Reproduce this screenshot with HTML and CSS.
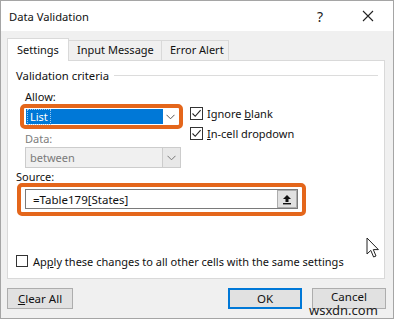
FILE: index.html
```html
<!DOCTYPE html>
<html>
<head>
<meta charset="utf-8">
<link rel="stylesheet" href="styles.css">
</head>
<body>
<div class="window">
  <div class="titlebar">
    <span class="title">Data Validation</span>
    <span class="help">?</span>
    <svg class="close" width="12" height="12" viewBox="0 0 12 12"><path d="M1 1 L11 11 M11 1 L1 11" stroke="#222" stroke-width="1.1" fill="none"/></svg>
  </div>
  <div class="body">
    <div class="tabs">
      <div class="tab active">Settings</div>
      <div class="tab tab-input">Input Message</div>
      <div class="tab tab-error">Error Alert</div>
    </div>
    <div class="panel">
      <div class="group-title"><span>Validation criteria</span><span class="rule"></span></div>
      <div class="criteria">
        <div class="col-left">
          <div class="label">Allow:</div>
          <div class="hl hl-allow">
            <div class="combo">
              <span class="val selected"><span class="focus">List</span></span>
              <span class="arrow"><svg width="9" height="6" viewBox="0 0 9 6"><path d="M0.5 0.8 L4.5 4.8 L8.5 0.8" stroke="#555" fill="none" stroke-width="1"/></svg></span>
            </div>
          </div>
          <div class="label label-data">Data:</div>
          <div class="combo disabled">
            <span class="val">between</span>
            <span class="arrow"><svg width="9" height="6" viewBox="0 0 9 6"><path d="M0.5 0.8 L4.5 4.8 L8.5 0.8" stroke="#777" fill="none" stroke-width="1"/></svg></span>
          </div>
        </div>
        <div class="col-right">
          <label class="check"><span class="box checked"><svg width="11" height="11" viewBox="0 0 11 11"><path d="M1.5 5.5 L4.2 8.3 L9.6 2.2" stroke="#222" fill="none" stroke-width="1.1"/></svg></span><span>Ignore <u>b</u>lank</span></label>
          <label class="check"><span class="box checked"><svg width="11" height="11" viewBox="0 0 11 11"><path d="M1.5 5.5 L4.2 8.3 L9.6 2.2" stroke="#222" fill="none" stroke-width="1.1"/></svg></span><span><u>I</u>n-cell dropdown</span></label>
        </div>
      </div>
      <div class="label label-source">Source:</div>
      <div class="hl hl-source">
        <div class="input">
          <span class="input-text">=Table179[States]</span>
          <span class="refbtn"><svg width="10" height="11" viewBox="0 0 10 11"><path d="M5 1 L9 5 L6.5 5 L6.5 8 L3.5 8 L3.5 5 L1 5 Z" fill="#111"/><rect x="1" y="9" width="8" height="1.4" fill="#111"/></svg></span>
        </div>
      </div>
      <label class="check apply"><span class="box"></span><span>Ap<u>p</u>ly these changes to all other cells with the same settings</span></label>
    </div>
    <div class="buttons">
      <div class="btn"><u>C</u>lear All</div>
      <div class="btn-group">
        <div class="btn default">OK</div>
        <div class="btn btn-cancel">Cancel</div>
      </div>
    </div>
  </div>
  <svg class="cursor" width="14" height="22" viewBox="0 0 14 22"><path d="M1 1 L1 17 L4.8 13.4 L7.6 20 L10 19 L7.3 12.6 L12.4 12.6 Z" fill="#fff" stroke="#222" stroke-width="1" stroke-linejoin="round"/></svg>
  <span class="watermark">wsxdn.com</span>
</div>
</body>
</html>
```

FILE: styles.css
```css
* { box-sizing: border-box; }
html, body { margin: 0; padding: 0; background: #fff; }
body {
  font-family: "Noto Sans", "Open Sans", sans-serif;
  font-size: 11px;
  color: #111;
}
.window {
  position: relative;
  width: 394px;
  height: 319px;
  border: 1px solid #a5a5a5;
  display: flex;
  flex-direction: column;
  background: #f0f0f0;
  overflow: hidden;
}
.titlebar {
  height: 30px;
  background: #fff;
  display: flex;
  align-items: center;
  padding-left: 8px;
  flex: none;
}
.title { font-size: 11.2px; flex: 1; }
.help { font-size: 14px; width: 12px; margin-right: 33px; color: #222; }
.close { margin-right: 19px; }
.body {
  flex: 1;
  padding: 7px 7px 0 6px;
  display: flex;
  flex-direction: column;
}
.tabs {
  display: flex;
  align-items: flex-end;
  height: 22px;
  position: relative;
  z-index: 1;
}
.tab {
  height: 20px;
  border: 1px solid #d9d9d9;
  border-bottom: none;
  padding: 0 0 0 8px;
  line-height: 18px;
  background: #f0f0f0;
  white-space: nowrap;
  margin-left: -1px;
}
.tab.active {
  height: 23px;
  margin-bottom: -1px;
  background: #fff;
  margin-left: 0;
  padding-left: 9px;
  line-height: 21px;
  width: 62px;
}
.tab-input { width: 94px; }
.tab-error { width: 68px; }
.panel {
  height: 219px;
  width: 378px;
  background: #fff;
  border: 1px solid #d9d9d9;
  padding: 6px 6px 0 8px;
  display: flex;
  flex-direction: column;
}
.group-title {
  display: flex;
  align-items: center;
  height: 16px;
  font-size: 11.3px;
}
.rule {
  flex: 1;
  height: 1px;
  background: #dcdcdc;
  margin-left: 5px;
}
.criteria {
  display: flex;
  padding-left: 9px;
}
.col-left { width: 156px; display: flex; flex-direction: column; }
.label { height: 15px; line-height: 15px; margin-top: 6px; color: #111; }
.label-data { color: #7d7d7d; margin-top: 2px; height: 16px; }
.hl {
  border: 4px solid #e4661b;
  border-radius: 5px;
}
.hl-allow {
  margin-left: -5px;
  width: 163px;
  margin-top: 0;
  padding: 0 1px;
  height: 25px;
}
.combo {
  display: flex;
  height: 17px;
  background: #fff;
}
.combo .val { flex: 1; padding-left: 2px; display: flex; align-items: center; }
.combo .val.selected { background: #0078d7; color: #fff; margin: 1px 0 0 1px; height: 15px; }
.focus { outline: 1px dotted #9cc7ef; padding: 0 2px; line-height: 14px; }
.combo .arrow { width: 15px; display: flex; align-items: center; justify-content: center; }
.combo.disabled {
  height: 21px;
  border: 1px solid #cccccc;
  background: #f0f0f0;
  color: #7a7a7a;
}
.combo.disabled .val { padding-left: 4px; }
.combo.disabled .arrow { width: 18px; border-left: 1px solid #cccccc; background: #e8e8e8; }
.col-right {
  display: flex;
  flex-direction: column;
  padding-top: 20px;
  margin-left: 9px;
}
.check { display: flex; align-items: center; height: 20px; white-space: nowrap; }
.box {
  width: 13px;
  height: 13px;
  border: 1px solid #333;
  background: #fff;
  margin-right: 4px;
  display: flex;
  align-items: center;
  justify-content: center;
  flex: none;
}
.label-source { margin-top: 1px; height: 14px; }
.hl-source {
  margin-left: 1px;
  width: 289px;
  height: 33px;
  padding: 2px 4px 3px 4px;
}
.input {
  height: 20px;
  border: 1px solid #7a7a7a;
  display: flex;
  align-items: center;
}
.input-text { flex: 1; padding-left: 7px; font-size: 11.5px; }
.refbtn {
  width: 20px;
  height: 18px;
  background: #e1e1e1;
  border: 1px solid #adadad;
  display: flex;
  align-items: center;
  justify-content: center;
}
.apply { margin-top: 36px; height: 18px; }
.apply .box { width: 12px; height: 12px; margin-right: 5px; }
.buttons {
  display: flex;
  justify-content: space-between;
  margin-top: 9px;
}
.btn-group { display: flex; gap: 10px; }
.btn {
  height: 21px;
  width: 66px;
  background: #e1e1e1;
  border: 1px solid #adadad;
  display: flex;
  align-items: center;
  justify-content: center;
  font-size: 11.5px;
}
.btn-group .btn { width: 74px; }
.btn.default { border: 2px solid #0078d7; }
.btn-cancel { align-items: flex-start; line-height: 15px; padding-top: 0; }
.cursor { position: absolute; left: 365px; top: 236px; }
.watermark {
  position: absolute;
  left: 308px;
  top: 302px;
  font-size: 13px;
  line-height: 14px;
  color: #222;
  font-family: "Noto Sans", sans-serif;
}
```
